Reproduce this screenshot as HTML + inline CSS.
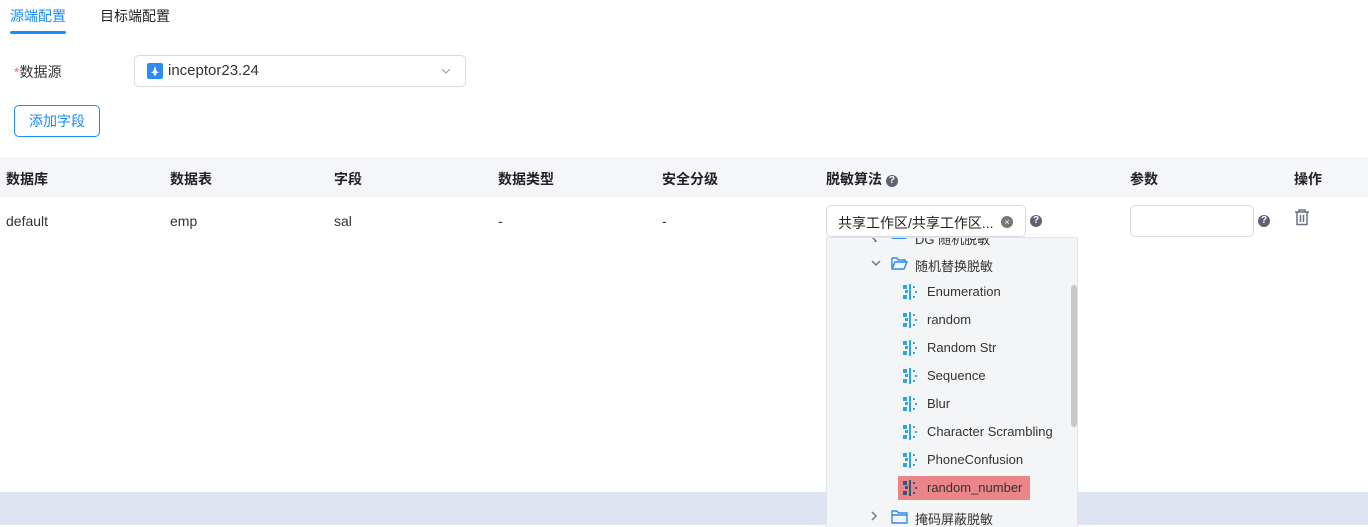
<!DOCTYPE html><html><head><meta charset="utf-8"><style>
*{margin:0;padding:0;box-sizing:border-box}
body{width:1368px;height:525px;position:relative;overflow:hidden;background:#fff;font-family:"Liberation Sans","Noto Sans CJK SC",sans-serif;font-size:14px;color:#333}
.a{position:absolute;white-space:nowrap}
</style></head><body>
<div class="a" style="left:10px;top:6px;color:#1a8cff">源端配置</div>
<div class="a" style="left:10px;top:31px;width:56px;height:3px;border-radius:2px;background:#1a8cff"></div>
<div class="a" style="left:100px;top:6px;color:#222">目标端配置</div>
<div class="a" style="left:14px;top:62px;color:#333"><span style="color:#f56c6c">*</span>数据源</div>
<div class="a" style="left:134px;top:55px;width:332px;height:32px;border:1px solid #d6dbe6;border-radius:5px"></div>
<div class="a" style="left:147px;top:63px;width:16px;height:16px;background:#2d8cf0;border-radius:2px"><svg width="16" height="16"><path d="M8 3L9.5 8L12 10L9.5 10L9 12.5H7L6.5 10L4 10L6.5 8Z" fill="#fff"/></svg></div>
<div class="a" style="left:168px;top:62px;font-size:15px;color:#333">inceptor23.24</div>
<svg class="a" style="left:441px;top:68px" width="10" height="6"><path d="M1 1L5 5L9 1" stroke="#999" fill="none"/></svg>
<div class="a" style="left:14px;top:105px;width:86px;height:32px;border:1px solid #1a8cff;border-radius:5px;color:#1a8cff;text-align:center;line-height:30px">添加字段</div>
<div class="a" style="left:0;top:157px;width:1368px;height:40px;background:#f5f6fa"></div>
<div class="a" style="left:6px;top:169px;font-weight:bold;color:#222">数据库</div>
<div class="a" style="left:170px;top:169px;font-weight:bold;color:#222">数据表</div>
<div class="a" style="left:334px;top:169px;font-weight:bold;color:#222">字段</div>
<div class="a" style="left:498px;top:169px;font-weight:bold;color:#222">数据类型</div>
<div class="a" style="left:662px;top:169px;font-weight:bold;color:#222">安全分级</div>
<div class="a" style="left:826px;top:169px;font-weight:bold;color:#222">脱敏算法 <span style="display:inline-block;width:12px;height:12px;border-radius:6px;background:#5d6370;color:#fff;font-size:10px;line-height:12px;text-align:center;vertical-align:1px">?</span></div>
<div class="a" style="left:1130px;top:169px;font-weight:bold;color:#222">参数</div>
<div class="a" style="left:1294px;top:169px;font-weight:bold;color:#222">操作</div>
<div class="a" style="left:6px;top:213px">default</div>
<div class="a" style="left:170px;top:213px">emp</div>
<div class="a" style="left:334px;top:213px">sal</div>
<div class="a" style="left:498px;top:213px">-</div>
<div class="a" style="left:662px;top:213px">-</div>
<div class="a" style="left:826px;top:205px;width:200px;height:32px;border:1px solid #d6dbe6;border-radius:5px"></div>
<div class="a" style="left:838px;top:213px;color:#222">共享工作区/共享工作区...</div>
<div class="a" style="left:1001px;top:216px;width:12px;height:12px;border-radius:6px;background:#777;color:#fff;font-size:9px;line-height:12px;text-align:center">×</div>
<div class="a" style="left:1030px;top:215px;width:12px;height:12px;border-radius:6px;background:#5d6370;color:#fff;font-size:10px;line-height:12px;text-align:center;font-weight:bold">?</div>
<div class="a" style="left:1130px;top:205px;width:124px;height:32px;border:1px solid #d6dbe6;border-radius:5px"></div>
<div class="a" style="left:1258px;top:215px;width:12px;height:12px;border-radius:6px;background:#5d6370;color:#fff;font-size:10px;line-height:12px;text-align:center;font-weight:bold">?</div>
<svg class="a" style="left:1294px;top:209px" width="16" height="17"><path d="M1 3H15M5 3V1H11V3M3 3V15.5H13V3M6.5 6V13M9.5 6V13" stroke="#6b7080" stroke-width="1.5" fill="none"/></svg>
<div class="a" style="left:0;top:492px;width:1368px;height:33px;background:#dde3f0"></div>
<div class="a" style="left:826px;top:237px;width:252px;height:290px;background:#f4f5f7;border:1px solid #dfe3ec;border-bottom:none;overflow:hidden">
<div class="a" style="left:244px;top:47px;width:6px;height:142px;background:#c8c8c8;border-radius:3px"></div>
<svg class="a" style="left:44px;top:-2px" width="10" height="6"><path d="M1 1L5 5L1 9" stroke="#777" stroke-width="1.5" fill="none"/></svg>
<div class="a" style="left:64px;top:-12px;width:16px;height:13px;border:1.5px solid #2d8cf0;border-radius:2px"></div>
<div class="a" style="left:88px;top:-9px;font-size:13px">DG 随机脱敏</div>
<svg class="a" style="left:44px;top:22px" width="10" height="6"><path d="M1 1L5 5L9 1" stroke="#777" stroke-width="1.5" fill="none"/></svg>
<svg class="a" style="left:64px;top:18px" width="17" height="14"><path d="M1 2H6L7.5 4H14V6M1 2V13H13L16 6H4L1 13" stroke="#2d8cf0" stroke-width="1.4" fill="none"/></svg>
<div class="a" style="left:88px;top:18px;font-size:13px">随机替换脱敏</div>
<div class="a" style="left:71px;top:238px;width:132px;height:24px;background:#eb8589"></div>
<svg class="a" style="left:44px;top:273px" width="6" height="10"><path d="M1 1L5 5L1 9" stroke="#777" stroke-width="1.5" fill="none"/></svg>
<svg class="a" style="left:64px;top:271px" width="17" height="15"><path d="M1 2H6L7.5 4H16V14H1Z M1 6H16" stroke="#2d8cf0" stroke-width="1.4" fill="none"/></svg>
<div class="a" style="left:88px;top:271px;font-size:13px">掩码屏蔽脱敏</div>
</div>
<div id="items"></div>
<script>
var n=["Enumeration","random","Random Str","Sequence","Blur","Character Scrambling","PhoneConfusion","random_number"],h="";
n.forEach(function(t,i){var y=284+i*28,c=i==7?"#2a5b78":"#2aa6e0";
h+='<svg class="a" style="left:903px;top:'+y+'px" width="16" height="16"><g fill="'+c+'"><rect x="0" y="1" width="4" height="4"/><rect x="2" y="6" width="3" height="3"/><rect x="0" y="11" width="4" height="4"/><rect x="6" y="0" width="2" height="16"/><rect x="10" y="2" width="2" height="2"/><rect x="12" y="7" width="2" height="2"/><rect x="10" y="12" width="2" height="2"/></g></svg>';
h+='<div class="a" style="left:927px;top:'+(y)+'px;font-size:13px;color:#333">'+t+'</div>';});
document.getElementById("items").innerHTML=h;
</script>
</body></html>
